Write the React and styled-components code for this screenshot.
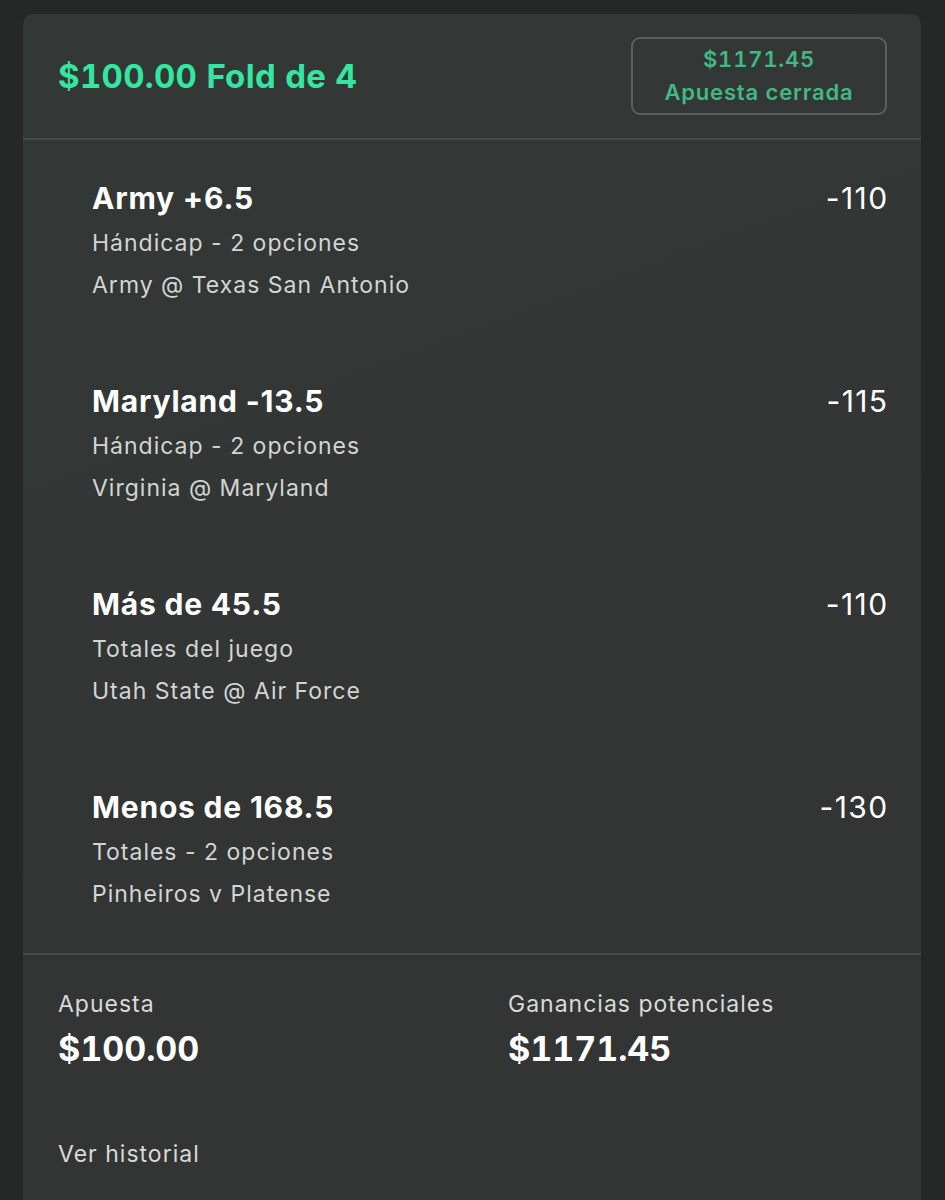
import styled, { createGlobalStyle } from 'styled-components';

const GlobalStyle = createGlobalStyle`
    html, body {
        margin: 0;
        padding: 0;
        background: #262727;
    }

    body {
        font-family: Inter, "Liberation Sans", Arial, sans-serif;
        -webkit-font-smoothing: antialiased;
    }
`;

const Page = styled.div`
    min-height: 1200px;
    padding: 14px 24px 0 23px;
    box-sizing: border-box;
    display: flex;
    flex-direction: column;
`;

const Card = styled.section`
    flex: 1;
    background: linear-gradient(160deg, #333836 0%, #323534 60%, #333534 100%);
    border-radius: 10px 10px 0 0;
    display: flex;
    flex-direction: column;
`;

const Header = styled.header`
    height: 124px;
    padding: 0 34px 0 35px;
    display: flex;
    align-items: center;
    justify-content: space-between;
    border-bottom: 2px solid #454947;
`;

const Title = styled.h1`
    margin: 0;
    font-size: 33px;
    font-weight: 700;
    letter-spacing: 0.3px;
    font-variant-numeric: tabular-nums;
    color: #33e6a2;
`;

const StatusBox = styled.div`
    width: 256px;
    height: 78px;
    box-sizing: border-box;
    border: 2px solid #5b5f5d;
    border-radius: 9px;
    display: flex;
    flex-direction: column;
    align-items: center;
    justify-content: center;
    gap: 4px;
    color: #43b784;
    font-weight: 600;
    font-size: 22px;
    line-height: 29px;
    letter-spacing: 0.8px;
    font-variant-numeric: tabular-nums;
`;

const Legs = styled.div`
    padding: 40px 34px 38px 69px;
    display: flex;
    flex-direction: column;
    gap: 77px;
    border-bottom: 2px solid #454947;
`;

const Leg = styled.div`
    display: flex;
    flex-direction: column;
`;

const LegTop = styled.div`
    display: flex;
    justify-content: space-between;
    align-items: center;
    height: 36px;
    margin-bottom: 6px;
`;

const Pick = styled.div`
    font-size: 30px;
    font-weight: 700;
    letter-spacing: 0.8px;
    color: #ffffff;
`;

const Odds = styled.div`
    font-size: 30px;
    font-weight: 400;
    letter-spacing: 1.4px;
    margin-right: -1.5px;
    color: #ffffff;
`;

const SubLine = styled.div`
    font-size: 23px;
    line-height: 42px;
    letter-spacing: 1px;
    color: #d3d5d4;
`;

const Footer = styled.div`
    padding: 34px 35px 0;
    display: flex;
    flex-direction: column;
    gap: 70px;
`;

const Totals = styled.div`
    display: grid;
    grid-template-columns: 450px 1fr;
`;

const Total = styled.div`
    display: flex;
    flex-direction: column;
    gap: 10px;
`;

const Label = styled.div`
    font-size: 23px;
    line-height: 30px;
    letter-spacing: 1px;
    color: #d8dad9;
`;

const Amount = styled.div`
    font-size: 34px;
    line-height: 40px;
    font-weight: 700;
    font-variant-numeric: tabular-nums;
    color: #ffffff;
`;

const legs = [
    { pick: 'Army +6.5', odds: '-110', market: 'Hándicap - 2 opciones', event: 'Army @ Texas San Antonio' },
    { pick: 'Maryland -13.5', odds: '-115', market: 'Hándicap - 2 opciones', event: 'Virginia @ Maryland' },
    { pick: 'Más de 45.5', odds: '-110', market: 'Totales del juego', event: 'Utah State @ Air Force' },
    { pick: 'Menos de 168.5', odds: '-130', market: 'Totales - 2 opciones', event: 'Pinheiros v Platense' },
];

export default function App() {
    return (
        <>
            <GlobalStyle />
            <Page>
                <Card>
                    <Header>
                        <Title>$100.00 Fold de 4</Title>
                        <StatusBox>
                            <span>$1171.45</span>
                            <span>Apuesta cerrada</span>
                        </StatusBox>
                    </Header>

                    <Legs>
                        {legs.map((leg) => (
                            <Leg key={leg.pick}>
                                <LegTop>
                                    <Pick>{leg.pick}</Pick>
                                    <Odds>{leg.odds}</Odds>
                                </LegTop>
                                <SubLine>{leg.market}</SubLine>
                                <SubLine>{leg.event}</SubLine>
                            </Leg>
                        ))}
                    </Legs>

                    <Footer>
                        <Totals>
                            <Total>
                                <Label>Apuesta</Label>
                                <Amount>$100.00</Amount>
                            </Total>
                            <Total>
                                <Label>Ganancias potenciales</Label>
                                <Amount>$1171.45</Amount>
                            </Total>
                        </Totals>
                        <Label>Ver historial</Label>
                    </Footer>
                </Card>
            </Page>
        </>
    );
}
